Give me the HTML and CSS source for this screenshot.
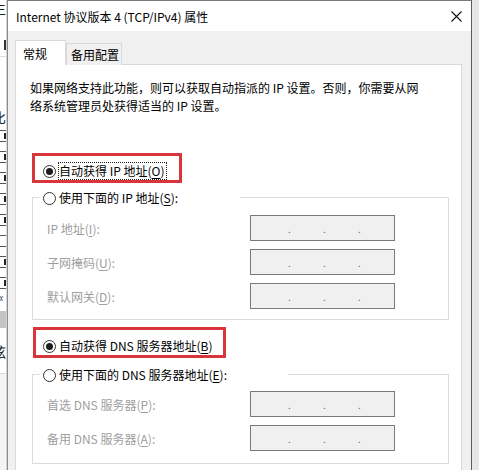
FILE: index.html
```html
<!DOCTYPE html>
<html lang="zh-CN">
<head>
<meta charset="utf-8">
<title>Internet 协议版本 4 (TCP/IPv4) 属性</title>
<link rel="stylesheet" href="styles.css">
</head>
<body>
<div class="desk">
  <div class="bgwin">
    <div class="bg-row bg-r1"><span class="bg-ch">生</span></div>
    <div class="bg-row bg-r2"><span class="bg-mark"></span></div>
    <div class="bg-row bg-r3"><span class="bg-ch">比</span></div>
    <div class="bg-checks">
      <span class="bg-cb"></span><span class="bg-cb"></span><span class="bg-cb"></span><span class="bg-cb"></span>
      <span class="bg-cb"></span><span class="bg-cb empty"></span><span class="bg-cb"></span><span class="bg-cb"></span>
    </div>
    <div class="bg-arrow">«</div>
    <div class="bg-band"></div>
    <div class="bg-row bg-r4"><span class="bg-ch">弦</span></div>
    <div class="bg-rest"></div>
  </div>

  <div class="dialog">
    <div class="titlebar">
      <span class="title">Internet 协议版本 4 (TCP/IPv4) 属性</span>
      <svg class="close" width="11" height="11" viewBox="0 0 11 11" aria-hidden="true">
        <path d="M0.5 0.5 L10.5 10.5 M10.5 0.5 L0.5 10.5" stroke="#111" stroke-width="1.1" fill="none"/>
      </svg>
    </div>
    <div class="dbody">
      <div class="tabs">
        <div class="tab active">常规</div>
        <div class="tab alt">备用配置</div>
      </div>
      <div class="panel">
        <p class="desc">如果网络支持此功能，则可以获取自动指派的 IP 设置。否则，你需要从网<br>络系统管理员处获得适当的 IP 设置。</p>

        <div class="mark mark1">
          <div class="radio"><span class="dot on"></span><span class="focus">自动获得 IP 地址(<u>O</u>)</span></div>
        </div>

        <div class="group g1">
          <div class="ghead gh1"><span class="dot"></span><span>使用下面的 IP 地址(<u>S</u>):</span></div>
          <div class="fields f1">
            <span class="lbl">IP 地址(<u>I</u>):</span>
            <span class="ipbox"><i>.</i><i>.</i><i>.</i></span>
            <span class="lbl">子网掩码(<u>U</u>):</span>
            <span class="ipbox"><i>.</i><i>.</i><i>.</i></span>
            <span class="lbl">默认网关(<u>D</u>):</span>
            <span class="ipbox"><i>.</i><i>.</i><i>.</i></span>
          </div>
        </div>

        <div class="mark mark2">
          <div class="radio"><span class="dot on"></span><span class="rtext">自动获得 DNS 服务器地址(<u>B</u>)</span></div>
        </div>

        <div class="group g2">
          <div class="ghead gh2"><span class="dot"></span><span>使用下面的 DNS 服务器地址(<u>E</u>):</span></div>
          <div class="fields f2">
            <span class="lbl">首选 DNS 服务器(<u>P</u>):</span>
            <span class="ipbox"><i>.</i><i>.</i><i>.</i></span>
            <span class="lbl">备用 DNS 服务器(<u>A</u>):</span>
            <span class="ipbox"><i>.</i><i>.</i><i>.</i></span>
          </div>
        </div>
      </div>
    </div>
  </div>

  <div class="bgright"></div>
</div>
</body>
</html>
```

FILE: styles.css
```css
* { box-sizing: border-box; }
html, body { margin: 0; padding: 0; }
body {
  width: 479px;
  height: 470px;
  overflow: hidden;
  background: #e8e8e8;
  font-family: "Noto Sans CJK SC", "Noto Sans", sans-serif;
  font-size: 12px;
  color: #000;
}
.desk { display: flex; height: 470px; }

/* background window strip on the left */
.bgwin {
  width: 7px;
  flex: none;
  background: #fff;
  overflow: hidden;
  display: flex;
  flex-direction: column;
  border-right: 1px solid #d6d6d6;
}
.bg-row { display: flex; align-items: center; }
.bg-r1 { height: 34px; align-items: flex-start; }
.bg-r2 { height: 23px; border-bottom: 1px solid #dcdcdc; }
.bg-r3 { height: 70px; align-items: flex-end; padding-bottom: 2px; }
.bg-ch { margin-left: -8px; font-size: 14px; color: #222; line-height: 16px; }
.bg-mark { width: 2px; height: 10px; background: #333; margin-left: 4px; }
.bg-checks { display: flex; flex-direction: column; gap: 9px; padding-top: 3px; }
.bg-cb {
  width: 12px; height: 12px; margin-left: -2px;
  border: 1px solid #555; background: #fff;
  display: block; position: relative;
}
.bg-cb::after { content: ""; display: block; width: 3px; height: 6px; background: #222; margin: 2px 0 0 5px; }
.bg-cb.empty::after { display: none; }
.bg-arrow { font-size: 12px; line-height: 12px; color: #333; margin-left: -2px; height: 14px; margin-top: 2px; }
.bg-band { height: 17px; background: #c4c4c4; margin-top: 6px; }
.bg-r4 { height: 46px; align-items: center; border-bottom: 1px solid #dcdcdc; }
.bg-rest { flex: 1; background: #f4f4f4; }

/* dialog */
.dialog {
  width: 465px;
  flex: none;
  border-left: 1px solid #8a8a8a;
  border-right: 1px solid #5c5c5c;
  border-top: 1px solid #7a7a7a;
  background: #f0f0f0;
  display: flex;
  flex-direction: column;
}
.titlebar {
  height: 30px;
  background: #fff;
  display: flex;
  align-items: center;
  justify-content: space-between;
  padding: 0 9px 0 8px;
  flex: none;
}
.title { font-size: 12px; color: #000; }
.close { display: block; margin-top: 0; }

.dbody { flex: 1; padding: 9px 9px 0 7px; }

.tabs {
  display: flex;
  align-items: flex-end;
  margin-bottom: -1px;
  position: relative;
  z-index: 1;
}
.tab {
  height: 22px;
  border: 1px solid #d9d9d9;
  border-bottom: none;
  background: #f0f0f0;
  display: flex;
  align-items: center;
}
.tab.active {
  height: 25px;
  width: 51px;
  padding-left: 7px;
  background: #fff;
}
.tab.alt {
  width: 56px;
  padding-left: 4px;
}

.panel {
  background: #fff;
  border: 1px solid #d9d9d9;
  height: 430px;
}
.desc {
  margin: 14px 0 0 14px;
  line-height: 18px;
}

.mark {
  border: 3px solid #d8363c;
}
.mark1 {
  margin: 38px 0 0 16px;
  width: 150px;
  height: 30px;
  padding: 7px 0 0 8px;
}
.mark2 {
  margin: 7px 0 0 17px;
  width: 193px;
  height: 31px;
  padding: 8px 0 0 7px;
}

.radio {
  display: flex;
  align-items: center;
  height: 16px;
  line-height: 16px;
  white-space: nowrap;
}
.dot {
  width: 13px;
  height: 13px;
  border: 1px solid #333;
  border-radius: 50%;
  background: #fff;
  flex: none;
  display: flex;
  align-items: center;
  justify-content: center;
  margin-right: 3px;
}
.dot.on::after {
  content: "";
  width: 7px;
  height: 7px;
  border-radius: 50%;
  background: #1e1e1e;
}
.focus {
  border: 1px dotted #222;
  padding: 0 1px 0 0;
  margin-left: -1px;
  line-height: 16px;
}
u { text-underline-offset: 2px; }

.group {
  border: 1px solid #dcdcdc;
  margin-left: 16px;
  width: 417px;
}
.g1 { margin-top: 14px; padding-bottom: 10px; }
.g2 { margin-top: 16px; padding-bottom: 12px; }

.ghead {
  margin-top: -8px;
  margin-left: 7px;
  padding-left: 3px;
  background: #fff;
  height: 16px;
  line-height: 16px;
  display: flex;
  align-items: center;
  white-space: nowrap;
}
.gh1 { width: 200px; }
.gh2 { width: 248px; }

.fields {
  display: grid;
  grid-template-columns: 203px 145px;
  row-gap: 8px;
  align-items: center;
  padding-left: 14px;
}
.f1 { margin-top: 9px; }
.f2 { margin-top: 8px; }

.lbl { color: #9e9e9e; white-space: nowrap; }
.ipbox {
  height: 26px;
  border: 1px solid #7a7a7a;
  background: #f0f0f0;
  display: flex;
  align-items: center;
  padding: 2px 0 0 37px;
}
.ipbox i {
  width: 35px;
  font-style: normal;
  color: #666;
  font-size: 10px;
  line-height: 10px;
}

.bgright {
  flex: 1;
  background: #e6e6e6;
}
```
